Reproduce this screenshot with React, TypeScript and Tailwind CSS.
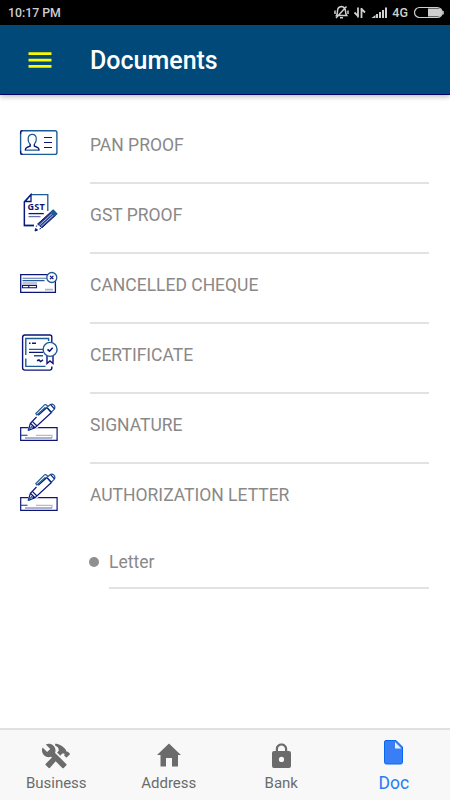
import React from "react";
import { IoMdConstruct } from "react-icons/io";

const navy = "#0c1678";
const blue = "#1d5b97";

function PanIcon() {
  return (
    <svg width="60" height="60" viewBox="0 0 60 60" fill="none" stroke={navy} strokeWidth="1.2">
      <rect x="10.6" y="10.7" width="36.3" height="23.7" rx="2" stroke={blue} strokeWidth="1.4" />
      <path d="M10.6 14v-1.5q0-1.8 2-1.8M10.6 31v1.5q0 1.9 2 1.9" />
      <path d="M20.2 24.2C18.3 22.5 18 20.6 18.2 18.4C18.4 15.5 20 14.3 22.2 14.3C24.6 14.3 26.2 15.8 26.3 18.4C26.4 20.8 25.8 22.6 24.4 24.2V26L27.6 27.5Q29 28.2 29 30.2H15.3Q15.3 28.2 16.8 27.5L20.2 26Z" stroke={blue} />
      <path d="M15.3 30.2Q15.3 28.2 16.8 27.5L20.2 26V24.2M24.4 24.2V26L27.6 27.5Q29 28.2 29 30.2" />
      <path d="M34 17.5h8M34 22.5h8M34 27.5h8" />
    </svg>
  );
}

function GstIcon() {
  return (
    <svg width="60" height="60" viewBox="0 0 60 60" fill="none" stroke={navy} strokeWidth="1.3">
      <path d="M37.8 26V9.6H21L14.4 16.5V40.5H24" stroke={blue} />
      <path d="M14.4 16.5V40.5H24M15 16.5h6V9.6z" />
      <path d="M18.5 28.6h15.3" />
      <path d="M18.5 31.6h12" stroke="#6973ab" />
      <text x="17.6" y="25.3" fill={navy} stroke="none" fontFamily="Open Sans, sans-serif" fontSize="9" fontWeight="700" textLength="17">GST</text>
      <path d="M24.8 46L27.5 38.5L43 24L48.5 29.3L32.5 43.2Z" fill="#fff" stroke="#fff" strokeWidth="2" />
      <path d="M27.6 39L43 25L47 29L32 42.8Z" fill="#26408a" stroke={navy} strokeWidth="1" />
      <path d="M29.3 40.3L42.3 28.4M30.8 41.6L43.8 29.8" stroke="#c5d0e8" strokeWidth="0.9" />
      <path d="M40.8 27L43.3 24.7L47.2 28.9L44.7 31.2Z" fill={blue} stroke={blue} strokeWidth="1" />
      <path d="M25 46l.6-2.4 2 1.4zM26.8 40.5l-.5 1.2M29.5 44l1.5-.6" fill={navy} strokeWidth="1" />
    </svg>
  );
}

function ChequeIcon() {
  return (
    <svg width="60" height="60" viewBox="0 0 60 60" fill="none" stroke={navy} strokeWidth="1.3">
      <path d="M38 14.6H10.7V32.4H45.4V21" />
      <path d="M12.5 18.3H37" stroke="#7f8fbf" />
      <path d="M12.5 20.6h22" stroke={blue} />
      <path d="M12.5 23H27M35 29.7h8" stroke="#aeb3c2" strokeWidth="1.7" />
      <path d="M12.5 25.4h14v2.3h-14zM18.8 25v3" strokeWidth="1.1" />
      <circle cx="41.8" cy="17.5" r="5" fill="#fff" stroke={blue} />
      <path d="M40 15.9l3.4 3.2M43.4 15.9L40 19.1" />
    </svg>
  );
}

function CertificateIcon() {
  return (
    <svg width="60" height="60" viewBox="0 0 60 60" fill="none" stroke={navy} strokeWidth="1.4">
      <path d="M41.8 17V12q0-2-2-2H15q-2.4 0-2.4 2.4V43q0 2.1 2.4 2.1H39.8q2 0 2-2v-1.5" />
      <path d="M38.6 16V13.5H15.8V30M15.8 33.5v7.9H35.5" stroke={blue} />
      <path d="M19 18.3h1.5M22 18.3h4M19 27.4h14" />
      <path d="M19 24.4h15M24 30.8h9" stroke={blue} />
      <path d="M27 35.8l2-.8 1.5 1.5 2.5-1.7" strokeWidth="1.5" />
      <path d="M37 30V38.5L40 36L43 38.5V30" fill="#fff" />
      <circle cx="40.1" cy="24.4" r="7" fill="#fff" stroke={blue} />
      <path d="M37.5 24.4l2 1.8 3.2-3.5" strokeWidth="1.6" />
    </svg>
  );
}

function SignatureIcon() {
  return (
    <svg width="60" height="60" viewBox="0 0 60 60" fill="none" stroke={navy} strokeWidth="1.2">
      <path d="M10.7 32.7H47.1V45.4H10.7Z" />
      <path d="M11 40.3h6.5" stroke={blue} />
      <path d="M26 40.3h16V43" stroke="#b7bac8" strokeWidth="1.2" />
      <path d="M15 43h27" stroke="#8388b0" strokeWidth="1.3" />
      <path d="M18 35.6L20.3 28L26 21.8L36.5 12.2L42.7 17.8L27.5 32.2L21.3 34.7Z" fill="#fff" stroke="#fff" />
      <path d="M18.2 35.5L20.4 28.3L26.5 22M18.2 35.5L25 32.8L42 17M28.2 20.3L37.2 12.3M20.4 28.3L25 32.8M22.3 26.4L27 31M24.2 31.5L22.5 33" />
      <path d="M36.8 12.5L40 9.7Q42 8.4 44 10.1Q45.7 12.2 44.2 14.4L41 17.4Z" fill="#fff" stroke={blue} />
      <path d="M40.6 9.7L44.4 13.9M37.3 12.8L41.3 17.2" />
      <path d="M27.2 20.5L25.8 18.6L34.2 10.1Q35.3 9.2 36.7 10.2L38 11.4M27.2 19.8L35.5 12.2" stroke={blue} />
      <path d="M18 35.7L22.3 31" stroke={blue} />
    </svg>
  );
}

const documents = [
  { name: "PAN PROOF", icon: <PanIcon />, offset: "pt-[6px]" },
  { name: "GST PROOF", icon: <GstIcon />, offset: "pt-px" },
  { name: "CANCELLED CHEQUE", icon: <ChequeIcon />, offset: "pt-[6px]" },
  { name: "CERTIFICATE", icon: <CertificateIcon />, offset: "pt-px" },
  { name: "SIGNATURE", icon: <SignatureIcon />, offset: "pt-px" },
  { name: "AUTHORIZATION LETTER", icon: <SignatureIcon />, offset: "pt-px" },
];

function StatusBar() {
  return (
    <div className="flex h-[25px] justify-between bg-black pl-2 text-[#cfcfcf]">
      <span className="text-[12.3px] leading-[26px] font-medium">10:17 PM</span>
      <svg width="125" height="25" viewBox="0 0 125 25" fill="none" stroke="#cfcfcf" strokeWidth="1.5">
        <path d="M11.5 15.5Q12.5 14 12.5 11Q12.5 7 16.5 6.5Q20.2 7 20.5 11Q20.5 14 21.7 15.5ZM15 17.7h3M10 10.5v3.5M23 10.5v3.5M11 18L21.5 6.5" />
        <path d="M29.5 12.5l4 4M33 17.5V7.5M36.5 18V8M36 8.5l4 4" strokeWidth="1.8" />
        <g fill="#cfcfcf" stroke="none">
          <path d="M46.5 18l4-3v3zM51 14h2v4h-2zM54 12h2v6h-2zM57 10h2v8h-2zM60 7.5h2V18h-2z" />
          <text x="67.3" y="17.2" fontFamily="Roboto, sans-serif" fontSize="12.5" fontWeight="500">4G</text>
          <path d="M103 8.5h10q4 0 4 4t-4 4h-10z" />
        </g>
        <rect x="89.5" y="7.5" width="27.7" height="10" rx="5" strokeWidth="1.2" />
        <path d="M118 11v3.5" />
      </svg>
    </div>
  );
}

function Tab({ label, children }: { label: string; children: React.ReactNode }) {
  return (
    <button className="flex flex-1 flex-col items-center text-[#6b6b6b]">
      <span className="flex h-[42px] items-end pb-[4px]">{children}</span>
      <span className="text-[15px] leading-[22px]">{label}</span>
    </button>
  );
}

export default function App() {
  return (
    <div className="flex h-[800px] w-[450px] flex-col overflow-hidden bg-white font-[Roboto,sans-serif]">
      <StatusBar />
      <header className="flex h-[70px] shrink-0 items-center border-b border-[#00006a] bg-[#004979] pl-7 shadow-[0_2px_5px_rgba(0,0,0,0.25)]">
        <svg width="25" height="18" viewBox="0 0 25 18" stroke="#fcf800" strokeWidth="2.6">
          <path d="M0.5 2.6h23M0.5 9.1h23M0.5 15.4h23" />
        </svg>
        <h1 className="ml-[37px] pt-[3px] text-[25px] leading-[30px] font-medium text-white">Documents</h1>
      </header>
      <main className="grow pt-[19px]">
        <ul>
          {documents.map((item, i) => (
            <li key={item.name} className="flex h-[70px] pr-[21px] pl-[10px]">
              <div className={"w-[80px] shrink-0 " + item.offset}>{item.icon}</div>
              <div className={i === 5 ? "grow" : "grow border-b-2 border-[#e2e2e2]"}>
                <span className="block pt-[20px] text-[17.5px] leading-[22px] text-[#8b8888]">{item.name}</span>
              </div>
            </li>
          ))}
        </ul>
        <div className="ml-[89px] flex h-[55px] pr-[21px]">
          <span className="mt-[23px] mr-[10px] size-[10px] rounded-full bg-[#918e8e]" />
          <div className="grow border-b-2 border-[#e2e2e2] pt-[17px] text-[17.5px] leading-[22px] text-[#8b8888]">Letter</div>
        </div>
      </main>
      <nav className="flex h-[72px] shrink-0 border-t-2 border-[#e0e0e0] bg-[#f8f8f8]">
        <Tab label="Business"><IoMdConstruct size={30} className="-mb-[3px]" /></Tab>
        <Tab label="Address">
          <svg width="24" height="25" viewBox="0 0 24 25" fill="currentColor"><path d="M12 0.5L0 12H3.5V23.5H9V15H15V23.5H21V12H24L20.5 8.7Z" /></svg>
        </Tab>
        <Tab label="Bank">
          <svg width="19" height="25" viewBox="0 0 19 25" fill="currentColor"><path fillRule="evenodd" d="M3.8 8V6C3.8-1.4 15.2-1.4 15.2 6V8H17Q19 8 19 10V23Q19 25 17 25H2Q0 25 0 23V10Q0 8 2 8ZM6 8H13V6C13 1.2 6 1.2 6 6ZM9.5 13.8A2.6 2.6 0 1 0 9.5 19A2.6 2.6 0 1 0 9.5 13.8Z" /></svg>
        </Tab>
        <button className="flex flex-1 flex-col items-center text-[#287cf4]">
          <svg className="mt-[10px]" width="19" height="25" viewBox="0 0 19 25" fill="#397ef5" stroke="#0869ef"><path d="M2 .5H12L18.5 7V22.5Q18.5 24 16.5 24H2.5Q.5 24 .5 22.5V2Q.5 .5 2 .5Z" /><path d="M11 2L17.4 8.5H11Z" fill="#e7f0fd" stroke="none" /></svg>
          <span className="mt-[8px] text-[17.5px] leading-[20px]">Doc</span>
        </button>
      </nav>
    </div>
  );
}
